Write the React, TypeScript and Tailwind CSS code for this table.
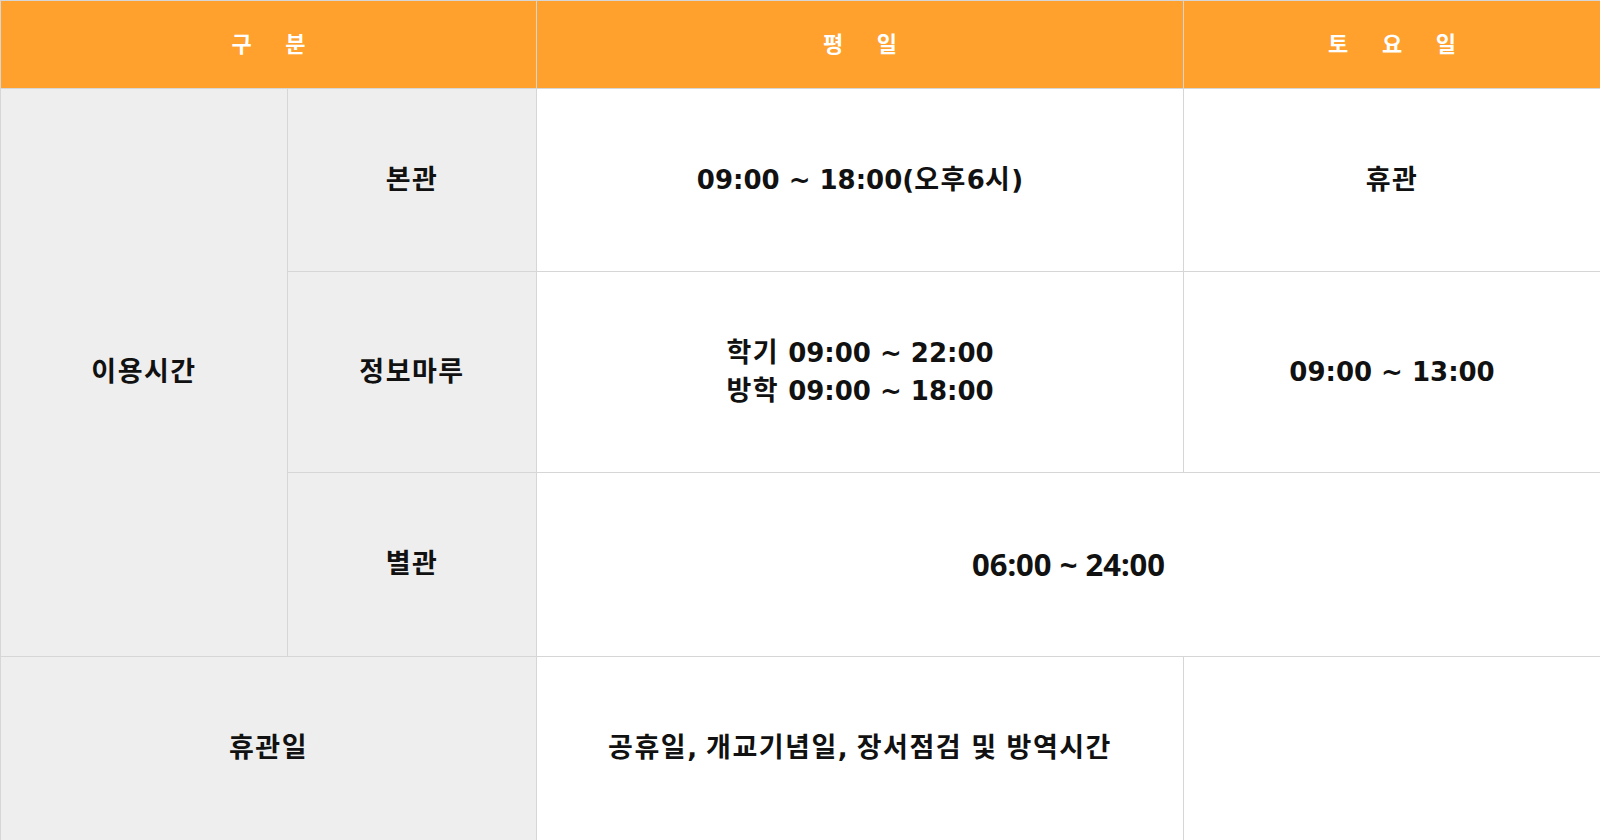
import React from 'react';

const cellBase = 'border border-[#d6d6d6] text-center align-middle font-bold text-[#111]';
const headCell = `${cellBase} bg-[#ffa12c] text-white text-[22px] tracking-[13px] pl-[13px]`;
const grayCell = `${cellBase} bg-[#eeeeee] text-[26px]`;
const whiteCell = `${cellBase} bg-white text-[26px]`;

// Hangul runs are set a touch larger and looser than the latin digits
function Txt({ children }: { children: string }) {
  const parts = children.split(/([가-힣]+)/);
  return (
    <>
      {parts.map((p, i) =>
        /[가-힣]/.test(p) ? (
          <span key={i} className="text-[27px] tracking-[1.5px]">
            {p}
          </span>
        ) : (
          <React.Fragment key={i}>{p}</React.Fragment>
        )
      )}
    </>
  );
}

export default function App() {
  return (
    <div
      className="w-[1600px] h-[840px] overflow-hidden bg-white"
      style={{ fontFamily: '"DejaVu Sans", "Noto Sans CJK KR", sans-serif' }}
    >
      <table className="w-[1600px] border-collapse table-fixed">
        <colgroup>
          <col className="w-[287px]" />
          <col className="w-[249px]" />
          <col className="w-[647px]" />
          <col className="w-[417px]" />
        </colgroup>
        <thead>
          <tr className="h-[88px]">
            <th colSpan={2} className={headCell}>구 분</th>
            <th className={headCell}>평 일</th>
            <th className={headCell}>토 요 일</th>
          </tr>
        </thead>
        <tbody>
          <tr className="h-[183px]">
            <td rowSpan={3} className={grayCell}><Txt>이용시간</Txt></td>
            <td className={grayCell}><Txt>본관</Txt></td>
            <td className={whiteCell}><Txt>09:00 ~ 18:00(오후6시)</Txt></td>
            <td className={whiteCell}><Txt>휴관</Txt></td>
          </tr>
          <tr className="h-[201px]">
            <td className={grayCell}><Txt>정보마루</Txt></td>
            <td className={`${whiteCell} leading-[37px]`}>
              <Txt>학기 09:00 ~ 22:00</Txt>
              <br />
              <Txt>방학 09:00 ~ 18:00</Txt>
            </td>
            <td className={whiteCell}>09:00 ~ 13:00</td>
          </tr>
          <tr className="h-[184px]">
            <td className={grayCell}><Txt>별관</Txt></td>
            <td colSpan={2} className={`${whiteCell} font-['Noto_Sans',sans-serif] text-[31px]`}>
              06:00 ~ 24:00
            </td>
          </tr>
          <tr className="h-[184px]">
            <td colSpan={2} className={grayCell}><Txt>휴관일</Txt></td>
            <td className={whiteCell}><Txt>공휴일, 개교기념일, 장서점검 및 방역시간</Txt></td>
            <td className={whiteCell}></td>
          </tr>
        </tbody>
      </table>
    </div>
  );
}
